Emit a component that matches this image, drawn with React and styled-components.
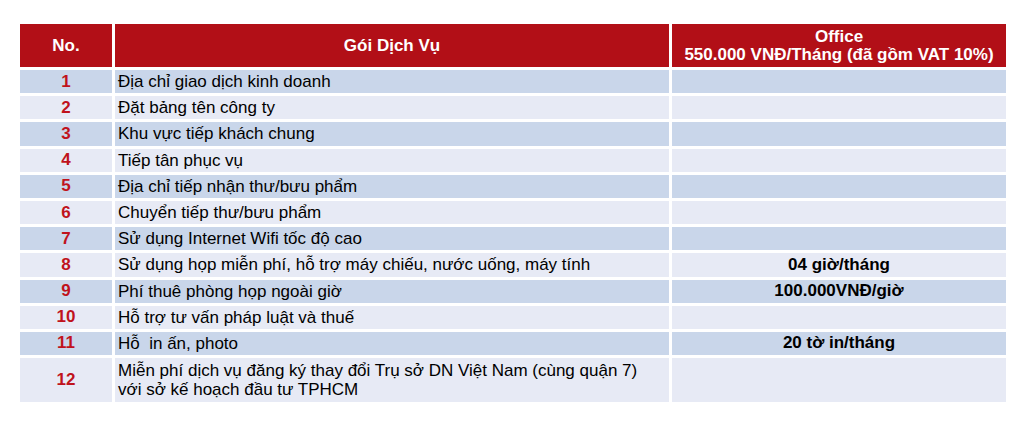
import React from 'react'
import styled, { createGlobalStyle } from 'styled-components'

const GlobalStyle = createGlobalStyle`
  html, body {
    margin: 0;
    padding: 0;
    background: #fff;
  }
  body {
    font-family: 'Liberation Sans', Arial, sans-serif;
  }
`

const Page = styled.div`
  padding: 21px 12px 0 17px;
`

const Table = styled.table`
  width: 992px;
  border-collapse: separate;
  border-spacing: 3px;
  table-layout: fixed;
  font-size: 17px;
`

const HeadCell = styled.th`
  height: 43px;
  padding: 0;
  background: #b20f17;
  color: #fff;
  font-weight: 700;
  font-size: 17px;
  line-height: 18px;
  text-align: center;
  vertical-align: middle;
`

const Row = styled.tr`
  background: ${p => (p.$dark ? '#c9d6ea' : '#e7eaf5')};
`

const NoCell = styled.td`
  height: ${p => (p.$tall ? '44px' : '23.2px')};
  padding: 0;
  text-align: center;
  color: #c0131c;
  font-weight: 700;
  background: inherit;
`

const NameCell = styled.td`
  padding: 0 2px 0 3px;
  color: #000;
  line-height: 19px;
  white-space: pre;
  background: inherit;
`

const ValueCell = styled.td`
  padding: 0;
  text-align: center;
  font-weight: 700;
  color: #000;
  background: inherit;
`

const rows = [
  ['Địa chỉ giao dịch kinh doanh', ''],
  ['Đặt bảng tên công ty', ''],
  ['Khu vực tiếp khách chung', ''],
  ['Tiếp tân phục vụ', ''],
  ['Địa chỉ tiếp nhận thư/bưu phẩm', ''],
  ['Chuyển tiếp thư/bưu phẩm', ''],
  ['Sử dụng Internet Wifi tốc độ cao', ''],
  ['Sử dụng họp miễn phí, hỗ trợ máy chiếu, nước uống, máy tính', '04 giờ/tháng'],
  ['Phí thuê phòng họp ngoài giờ', '100.000VNĐ/giờ'],
  ['Hỗ trợ tư vấn pháp luật và thuế', ''],
  ['Hỗ  in ấn, photo', '20 tờ in/tháng'],
  [
    <>
      Miễn phí dịch vụ đăng ký thay đổi Trụ sở DN Việt Nam (cùng quận 7)
      <br />
      với sở kế hoạch đầu tư TPHCM
    </>,
    ''
  ]
]

export default function App () {
  return (
    <Page>
      <GlobalStyle />
      <Table>
        <colgroup>
          <col style={{ width: 92 }} />
          <col style={{ width: 554 }} />
          <col />
        </colgroup>
        <thead>
          <tr>
            <HeadCell>No.</HeadCell>
            <HeadCell>Gói Dịch Vụ</HeadCell>
            <HeadCell>
              Office
              <br />
              550.000 VNĐ/Tháng (đã gồm VAT 10%)
            </HeadCell>
          </tr>
        </thead>
        <tbody>
          {rows.map(([name, value], i) => (
            <Row key={i} $dark={i % 2 === 0}>
              <NoCell $tall={i === rows.length - 1}>{i + 1}</NoCell>
              <NameCell>{name}</NameCell>
              <ValueCell>{value}</ValueCell>
            </Row>
          ))}
        </tbody>
      </Table>
    </Page>
  )
}
